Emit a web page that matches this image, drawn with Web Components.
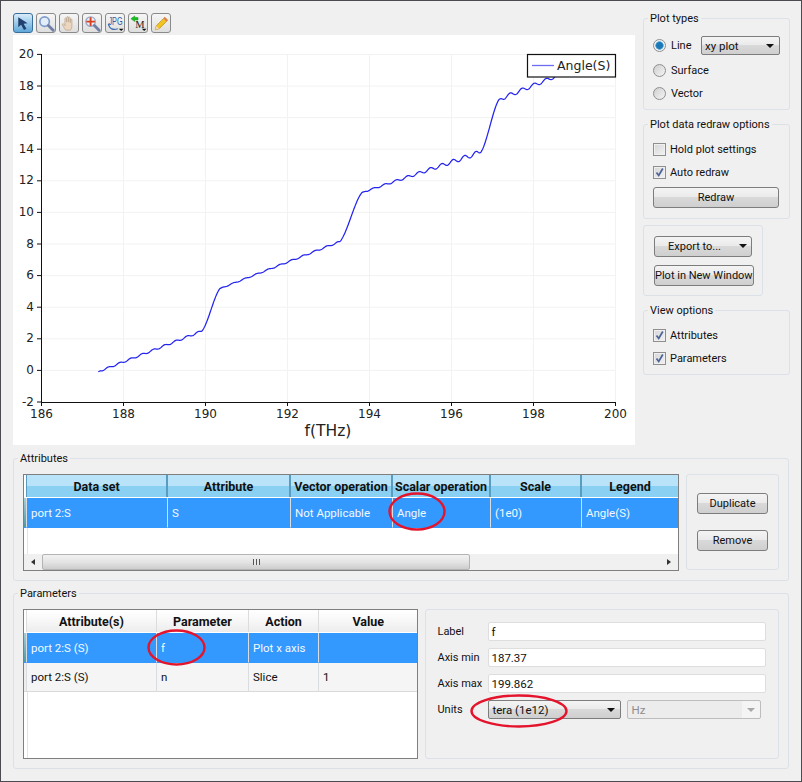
<!DOCTYPE html>
<html>
<head>
<meta charset="utf-8">
<title>Plot</title>
<style>
	html, body { margin: 0; padding: 0; background: #f0f0f0; }
</style>
</head>
<body>
<app-window>
	<tool-bar slot="toolbar"></tool-bar>
	<plot-canvas slot="plot"></plot-canvas>

	<div slot="side" style="display:flex;flex-direction:column;gap:6px;width:147px">
		<group-box title="Plot types" pad="10px 9px 6px 9px">
			<form-row h="19"><ui-radio checked>Line</ui-radio><ui-combo style="width:79px;margin-left:auto;margin-right:0" >xy plot</ui-combo></form-row>
			<form-row h="19" top="6"><ui-radio>Surface</ui-radio></form-row>
			<form-row h="19" top="4"><ui-radio>Vector</ui-radio></form-row>
		</group-box>
		<group-box title="Plot data redraw options" pad="8px 10px 10px 9px">
			<form-row h="18"><ui-check>Hold plot settings</ui-check></form-row>
			<form-row h="18" top="5"><ui-check checked>Auto redraw</ui-check></form-row>
			<form-row h="21" top="6"><ui-button style="width:126px">Redraw</ui-button></form-row>
		</group-box>
		<plain-box pad="10px 10px 9px 10px" style="width:120px">
			<form-row h="20"><ui-button style="width:100px" menu>Export to...</ui-button></form-row>
			<form-row h="21" top="9"><ui-button style="width:100px">Plot in New Window</ui-button></form-row>
		</plain-box>
		<group-box title="View options" pad="8px 10px 7px 9px">
			<form-row h="18"><ui-check checked>Attributes</ui-check></form-row>
			<form-row h="18" top="5"><ui-check checked>Parameters</ui-check></form-row>
		</group-box>
	</div>

	<group-box title="Attributes" pad="8px 9px 9px 9px" style="margin-top:5px">
		<div style="display:flex;gap:7px">
			<data-table skin="blue" h="97" style="width:656px"
				cols="141px 123px 102px 98px 91px 1fr"
				headers="Data set|Attribute|Vector operation|Scalar operation|Scale|Legend">
				<table-row selected cells="port 2:S|S|Not Applicable|Angle|(1e0)|Angle(S)"></table-row>
				<h-scroll slot="footer"></h-scroll>
			</data-table>
			<plain-box pad="18px 10px 19px 10px" style="width:93px;height:96px;box-sizing:border-box">
				<form-row h="21"><ui-button style="width:73px">Duplicate</ui-button></form-row>
				<form-row h="21" top="16"><ui-button style="width:73px">Remove</ui-button></form-row>
			</plain-box>
		</div>
	</group-box>

	<group-box title="Parameters" pad="8px 9px 9px 9px" style="margin-top:4px">
		<div style="display:flex;gap:7px">
			<data-table skin="plain" h="150" style="width:396px"
				cols="130px 92px 70px 1fr"
				headers="Attribute(s)|Parameter|Action|Value">
				<table-row selected cells="port 2:S (S)|f|Plot x axis|"></table-row>
				<table-row cells="port 2:S (S)|n|Slice|1"></table-row>
			</data-table>
			<plain-box pad="12px 12px 10px 11px" style="width:354px;height:150px;box-sizing:border-box">
				<form-line label="Label"><text-field>f</text-field></form-line>
				<form-line label="Axis min"><text-field>187.37</text-field></form-line>
				<form-line label="Axis max"><text-field>199.862</text-field></form-line>
				<form-line label="Units">
					<div style="display:flex;gap:6px;width:273px">
						<ui-combo style="width:133px">tera (1e12)</ui-combo>
						<ui-combo style="width:134px" disabled>Hz</ui-combo>
					</div>
				</form-line>
			</plain-box>
		</div>
	</group-box>
</app-window>

<script>
class AppWindow extends HTMLElement {
	constructor() {
		super();
		this.attachShadow({ mode: 'open' });
		this.shadowRoot.innerHTML = `
			<style>
				:host {
					display: block;
					position: relative;
					box-sizing: border-box;
					width: 802px;
					height: 782px;
					overflow: hidden;
					padding: 9px 12px 0 12px;
					background: #f0f0f0;
					border: 1px solid #4a4a50;
					font: 11px Roboto, "Noto Sans", sans-serif;
					color: #111;
				}
				.top { display: flex; gap: 8px; align-items: flex-start; }
				.left { width: 622px; padding-top: 3px; }
				.marks { position: absolute; left: -1px; top: -1px; pointer-events: none; }
				ellipse { fill: none; stroke: #e4142c; stroke-width: 2.4; }
			</style>
			<div class="top">
				<div class="left">
					<slot name="toolbar"></slot>
					<slot name="plot"></slot>
				</div>
				<slot name="side"></slot>
			</div>
			<slot></slot>
			<svg class="marks" width="802" height="782">
				<ellipse cx="417" cy="511.5" rx="27.5" ry="18"></ellipse>
				<ellipse cx="176.5" cy="647.5" rx="28" ry="17"></ellipse>
				<ellipse cx="519" cy="711" rx="47.5" ry="15.5"></ellipse>
			</svg>
		`;
	}
}

class ToolBar extends HTMLElement {
	constructor() {
		super();
		this.attachShadow({ mode: 'open' });
		const lens = `<circle cx="8" cy="8" r="5" fill="#e3edf9" stroke="#7e9ccb" stroke-width="1.8"/>
			<path d="M12 12l5 5" stroke="#6f7fa6" stroke-width="3" stroke-linecap="round"/>`;
		const drop = `<path d="M13.5 15.5h5l-2.5 2.5z" fill="#111"/>`;
		const icons = [
			`<path d="M4.5 3.5v10.5l3-2.6 3 5.4 2.6-1.4-3-5.2 4.2-.5z" fill="#22406f"/>`,
			lens,
			`<path d="M6 17c-1-2-3-4-3.500-6 0-1 1.200-1 1.800 0l.9 1.300V5c0-1.200 1.600-1.200 1.700 0l.2 3.500V3.500c0-1.200 1.700-1.200 1.800 0l.1 5V4.300c0-1.200 1.700-1.200 1.700 0l.1 4.700.1-3c.1-1.100 1.600-1.100 1.600 0V13c0 1.500-.8 3-1.500 4z" fill="#ecd6c0" stroke="#c2ab94" stroke-width=".9"/>`,
			`<circle cx="8" cy="8" r="5" fill="#eceff6" stroke="#98a8c8" stroke-width="1.4"/>
				<path d="M12 12l5 5" stroke="#6f7fa6" stroke-width="3" stroke-linecap="round"/>
				<path d="M8 3.500v9M3.500 8h9" stroke="#d8401f" stroke-width="2"/>`,
			`<text transform="translate(10 12) scale(.9 1.400)" font-family="Liberation Sans, sans-serif" font-size="8.500" text-anchor="middle" fill="#2c5da6">JPG</text>
				<path d="M2.500 10.500c1 5.500 5 6.500 10 5" fill="none" stroke="#3f6fb0" stroke-width="1.300"/>${drop}`,
			`<path d="M2 5l4-3v1.700h3.500v2.600H6V8z" fill="#16c21e" stroke="#149018" stroke-width=".5"/>
				<text x="11.500" y="15" font-family="Liberation Serif, serif" font-size="11" text-anchor="middle" fill="#222">M</text>${drop}`,
			`<path d="M3.500 16.500l1-4L13.500 3.500l3 3-9 9z" fill="#f3c41f" stroke="#b88f16" stroke-width=".8"/>
				<path d="M3.500 16.500l1-4 3 3z" fill="#f0d8b0"/><path d="M12.200 4.800l3 3 1.300-1.300-3-3z" fill="#e07a60"/>`
		];
		this.shadowRoot.innerHTML = `
			<style>
				:host { display: flex; gap: 3px; height: 20px; margin-bottom: 2px; }
				.tool {
					box-sizing: border-box;
					width: 20px;
					height: 20px;
					border: 1px solid #8a8a8a;
					border-radius: 3px;
					background: linear-gradient(#f6f6f6, #dedede);
				}
				.tool.on {
					border-color: #3a6f9c;
					background: linear-gradient(#d8ecfa, #5fa8d8);
				}
				svg { display: block; margin: -0.500px; }
			</style>
			${icons.map((icon, i) => `<div class="tool ${i === 0 ? 'on' : ''}"><svg width="19" height="19" viewBox="0 0 20 20">${icon}</svg></div>`).join('')}
		`;
	}
}

class PlotCanvas extends HTMLElement {
	constructor() {
		super();
		this.attachShadow({ mode: 'open' });
		this.shadowRoot.innerHTML = `
			<style>
				:host { display: block; width: 622px; height: 410px; background: #fff; }
				svg { display: block; }
				text { font-family: "DejaVu Sans", sans-serif; fill: #222; }
			</style>
			<svg width="622" height="410" viewBox="13 35 622 410">${this.#chart()}</svg>
		`;
	}

	// px coordinates below are the window's, the viewBox takes care of the offset
	#curve() {
		const plateaus = [
			{ x0: 98.3, x1: 202, y0: 371.7, y1: 331, peak: 108.3, period: 11.25, a0: 0.8, a1: 1 },
			{ x0: 220, x1: 340, y0: 288.5, y1: 241.5, peak: 233, period: 11.7, a0: 0.5, a1: 0.8 },
			{ x0: 362, x1: 481, y0: 192.5, y1: 152, peak: 373.3, period: 11.4, a0: 0.5, a1: 2.4 },
			{ x0: 499, x1: 566, y0: 99.5, y1: 72, peak: 510, period: 12, a0: 2, a1: 1.6 }
		];
		const pts = [];
		for (let x = 98.3; x <= 566; x += 0.5) {
			let y = 0;
			const p = plateaus.find(s => x >= s.x0 && x <= s.x1);
			if (p) {
				const t = (x - p.x0) / (p.x1 - p.x0);
				const fade = Math.min(1, (x - p.x0) / 5, (p.x1 - x) / 3);
				const amp = (p.a0 + (p.a1 - p.a0) * t) * Math.max(fade, 0);
				y = p.y0 + (p.y1 - p.y0) * t - amp * Math.cos(2 * Math.PI * (x - p.peak) / p.period);
			} else {
				const i = plateaus.findIndex(s => x < s.x0);
				const a = plateaus[i - 1], b = plateaus[i];
				const t = (x - a.x1) / (b.x0 - a.x1);
				// half linear, half eased: the steps of the curve are not that sharp
				const e = 0.5 * t + 0.5 * t * t * (3 - 2 * t);
				y = a.y1 + (b.y0 - a.y1) * e;
			}
			pts.push(x.toFixed(1) + ' ' + y.toFixed(2));
		}
		return 'M' + pts.join('L');
	}

	#chart() {
		const xs = [186, 188, 190, 192, 194, 196, 198, 200];
		const ys = [-2, 0, 2, 4, 6, 8, 10, 12, 14, 16, 18, 20];
		const px = v => 41.500 + (v - 186) * 41;
		const py = v => 402 - (v + 2) * 15.8;
		let s = '';
		for (const v of xs.slice(1)) s += `<path d="M${px(v)} 54V402" stroke="#f2f2f2" stroke-width="1"/>`;
		for (const v of ys.slice(1)) s += `<path d="M41 ${py(v)}H615" stroke="#f2f2f2" stroke-width="1"/>`;
		s += `<path d="${this.#curve()}" fill="none" stroke="#2424f0" stroke-width="1.250"/>`;
		s += `<path d="M41.500 54V402.500H615" fill="none" stroke="#111" stroke-width="1"/>`;
		for (const v of xs) {
			s += `<path d="M${px(v)} 402V406" stroke="#111"/>`;
			s += `<text x="${px(v)}" y="418" font-size="12" text-anchor="middle">${v}</text>`;
		}
		for (const v of ys) {
			s += `<path d="M37 ${py(v)}H41" stroke="#111"/>`;
			s += `<text x="34" y="${py(v) + 3.500}" font-size="12" text-anchor="end">${v}</text>`;
		}
		s += `<text x="328" y="436" font-size="15.500" text-anchor="middle">f(THz)</text>`;
		s += `<rect x="527.500" y="54.500" width="88" height="22.500" fill="#fff" stroke="#111" stroke-width="1.200"/>`;
		s += `<path d="M532 65.500H554" stroke="#6c6cf4" stroke-width="1.300"/>`;
		s += `<text x="557" y="69.500" font-size="12.500">Angle(S)</text>`;
		return s;
	}
}

class GroupBox extends HTMLElement {
	constructor() {
		super();
		this.attachShadow({ mode: 'open' });
		this.shadowRoot.innerHTML = `
			<style>
				:host { display: block; }
				fieldset {
					margin: 0;
					min-width: 0;
					border: 1px solid #dbe1e7;
					border-radius: 3px;
					padding: ${this.getAttribute('pad') || '8px'};
				}
				legend {
					margin-left: -5px;
					padding: 0 2px;
					line-height: 16px;
					white-space: nowrap;
				}
				legend span { position: relative; top: 1px; }
			</style>
			<fieldset>
				<legend><span>${this.getAttribute('title')}</span></legend>
				<slot></slot>
			</fieldset>
		`;
	}
}

class PlainBox extends HTMLElement {
	constructor() {
		super();
		this.attachShadow({ mode: 'open' });
		this.shadowRoot.innerHTML = `
			<style>
				:host {
					display: block;
					box-sizing: border-box;
					border: 1px solid #dbe1e7;
					border-radius: 3px;
					padding: ${this.getAttribute('pad') || '8px'};
				}
			</style>
			<slot></slot>
		`;
	}
}

class FormRow extends HTMLElement {
	constructor() {
		super();
		this.attachShadow({ mode: 'open' });
		this.shadowRoot.innerHTML = `
			<style>
				:host {
					display: flex;
					align-items: center;
					height: ${this.getAttribute('h') || 18}px;
					margin-top: ${this.getAttribute('top') || 0}px;
				}
			</style>
			<slot></slot>
		`;
	}
}

class FormLine extends HTMLElement {
	constructor() {
		super();
		this.attachShadow({ mode: 'open' });
		this.shadowRoot.innerHTML = `
			<style>
				:host {
					display: flex;
					align-items: center;
					height: 19px;
					margin-bottom: 7px;
				}
				span { width: 51px; flex: none; }
				div { flex: 1; }
			</style>
			<span>${this.getAttribute('label')}</span>
			<div><slot></slot></div>
		`;
	}
}

class TextField extends HTMLElement {
	constructor() {
		super();
		this.attachShadow({ mode: 'open' });
		this.shadowRoot.innerHTML = `
			<style>
				:host {
					display: block;
					box-sizing: border-box;
					height: 19px;
					line-height: 18px;
					padding-left: 2px;
					font-size: 11.500px;
					background: #fff;
					border: 1px solid #dedede;
					border-radius: 2px;
				}
			</style>
			<slot></slot>
		`;
	}
}

class UiButton extends HTMLElement {
	constructor() {
		super();
		this.attachShadow({ mode: 'open' });
		const menu = this.hasAttribute('menu');
		this.shadowRoot.innerHTML = `
			<style>
				:host {
					display: flex;
					align-items: center;
					justify-content: ${menu ? 'flex-start' : 'center'};
					box-sizing: border-box;
					height: 21px;
					white-space: nowrap;
					border: 1px solid #7d7d7d;
					border-radius: 3px;
					background: linear-gradient(#f4f4f4 0, #ebebeb 45%, #d9d9d9 50%, #cfcfcf 100%);
					padding: 0 ${menu ? '4px 0 13px' : '0'};
				}
				i {
					margin-left: auto;
					border: 4px solid transparent;
					border-top: 4px solid #111;
					border-bottom: 0;
				}
			</style>
			<slot></slot>${menu ? '<i></i>' : ''}
		`;
	}
}

class UiCombo extends HTMLElement {
	constructor() {
		super();
		this.attachShadow({ mode: 'open' });
		const off = this.hasAttribute('disabled');
		this.shadowRoot.innerHTML = `
			<style>
				:host {
					display: flex;
					align-items: center;
					box-sizing: border-box;
					height: 19px;
					padding: 0 5px 0 3px;
					font-size: 11.500px;
					border: 1px solid ${off ? '#bdbdbd' : '#7d7d7d'};
					border-radius: 2px;
					color: ${off ? '#8c8c8c' : '#111'};
					background: ${off ? 'linear-gradient(90deg, #ececec 86%, #f4f4f4 86%)' : 'linear-gradient(#f4f4f4 0, #ebebeb 45%, #d9d9d9 50%, #cfcfcf 100%)'};
				}
				i {
					margin-left: auto;
					border: 4px solid transparent;
					border-top: 4px solid ${off ? '#a8a8a8' : '#111'};
					border-bottom: 0;
				}
			</style>
			<slot></slot><i></i>
		`;
	}
}

class UiCheck extends HTMLElement {
	constructor() {
		super();
		this.attachShadow({ mode: 'open' });
		const tick = this.hasAttribute('checked')
			? '<svg width="11" height="11"><path d="M2.500 5.500l2.200 3L8.800 1.500" fill="none" stroke="#4d6299" stroke-width="1.700"/></svg>'
			: '';
		this.shadowRoot.innerHTML = `
			<style>
				:host { display: flex; align-items: center; gap: 4px; white-space: nowrap; }
				.box {
					box-sizing: border-box;
					width: 13px;
					height: 13px;
					border: 1px solid #8f8f8f;
					background: linear-gradient(135deg, #d6d6d6, #f2f2f2);
					box-shadow: inset 0 0 0 1px #f0f0f0;
				}
				svg { display: block; }
			</style>
			<div class="box">${tick}</div>
			<slot></slot>
		`;
	}
}

class UiRadio extends HTMLElement {
	constructor() {
		super();
		this.attachShadow({ mode: 'open' });
		const on = this.hasAttribute('checked');
		this.shadowRoot.innerHTML = `
			<style>
				:host { display: flex; align-items: center; gap: 5px; white-space: nowrap; }
				.dot {
					box-sizing: border-box;
					width: 13px;
					height: 13px;
					border: 1px solid #8f8f8f;
					border-radius: 50%;
					background: ${on ? 'radial-gradient(circle at 50% 50%, #1a78b8 0 3px, #6fb4dc 4px, #eef2f5 4.500px)' : 'linear-gradient(135deg, #cfcfcf, #f4f4f4)'};
				}
			</style>
			<div class="dot"></div>
			<slot></slot>
		`;
	}
}

class DataTable extends HTMLElement {
	constructor() {
		super();
		this.attachShadow({ mode: 'open' });
		const blue = this.getAttribute('skin') === 'blue';
		const heads = this.getAttribute('headers').split('|');
		this.style.setProperty('--cols', '3px ' + this.getAttribute('cols'));
		this.shadowRoot.innerHTML = `
			<style>
				:host {
					display: flex;
					flex-direction: column;
					box-sizing: border-box;
					height: ${this.getAttribute('h')}px;
					background: #fff;
					border: 1px solid #7f7f7f;
				}
				.head {
					display: grid;
					grid-template-columns: var(--cols);
					height: 22px;
					flex: none;
					border-bottom: 1px solid #fff;
				}
				.head div {
					display: flex;
					align-items: center;
					justify-content: center;
					padding-top: 1px;
					font-weight: 700;
					font-size: 12.500px;
					white-space: nowrap;
					overflow: hidden;
					box-sizing: border-box;
					border-right: ${blue ? '2px solid #5a9cc0' : '1px solid #dcdcdc'};
					background: ${blue
						? 'linear-gradient(#b9e3f8 0, #b9e3f8 50%, #8ad0f3 50%, #8ad0f3 100%)'
						: 'linear-gradient(#ffffff 0, #f7f7f7 50%, #ececec 100%)'};
				}
				.head div:last-child { border-right: 0; }
				.head .stub { background: #fff; border-right: ${blue ? '1px solid #5a9cc0' : '1px solid #dcdcdc'}; }
				.rest { flex: 1; width: 3px; border-right: 1px solid #e4e4e4; }
			</style>
			<div class="head"><div class="stub"></div>${heads.map(h => `<div>${h}</div>`).join('')}</div>
			<slot></slot>
			<div class="rest"></div>
			<slot name="footer"></slot>
		`;
	}
}

class TableRow extends HTMLElement {
	constructor() {
		super();
		this.attachShadow({ mode: 'open' });
		const on = this.hasAttribute('selected');
		const cells = this.getAttribute('cells').split('|');
		this.shadowRoot.innerHTML = `
			<style>
				:host {
					display: grid;
					grid-template-columns: var(--cols);
					height: 29.500px;
					font-size: 11.500px;
					color: ${on ? '#f4f8ff' : '#111'};
				}
				div {
					box-sizing: border-box;
					display: flex;
					align-items: center;
					padding: 1px 0 0 4px;
					white-space: nowrap;
					overflow: hidden;
					background: ${on ? '#3399ff' : '#f5f5f5'};
					border-right: 1px solid #d9dde0;
					border-bottom: 1px solid ${on ? '#3399ff' : '#d9d9d9'};
				}
				div:last-child { border-right: 0; }
				.stub { padding: 0; background: ${on ? 'linear-gradient(#a6cfd8, #4d9aa8)' : '#eeeeee'}; }
			</style>
			<div class="stub"></div>${cells.map(c => `<div>${c}</div>`).join('')}
		`;
	}
}

class HScroll extends HTMLElement {
	constructor() {
		super();
		this.attachShadow({ mode: 'open' });
		this.shadowRoot.innerHTML = `
			<style>
				:host {
					display: flex;
					align-items: stretch;
					height: 16px;
					background: #f0f0f0;
				}
				.end { width: 18px; flex: none; display: flex; align-items: center; justify-content: center; }
				.thumb {
					width: 428px;
					display: flex;
					align-items: center;
					justify-content: center;
					box-sizing: border-box;
					border: 1px solid #b4b4b4;
					border-radius: 2px;
					background: linear-gradient(#f2f2f2, #e4e4e4 50%, #cdcdcd);
				}
				.track { flex: 1; }
				i { border: 3.500px solid transparent; }
				.l { border-right: 4px solid #333; border-left: 0; }
				.r { border-left: 4px solid #333; border-right: 0; }
				.grip { width: 7px; height: 6px; background: repeating-linear-gradient(90deg, #555 0 1px, #e8e8e8 1px 3px); }
			</style>
			<div class="end"><i class="l"></i></div>
			<div class="thumb"><div class="grip"></div></div>
			<div class="track"></div>
			<div class="end"><i class="r"></i></div>
		`;
	}
}

customElements.define('app-window', AppWindow);
customElements.define('tool-bar', ToolBar);
customElements.define('plot-canvas', PlotCanvas);
customElements.define('group-box', GroupBox);
customElements.define('plain-box', PlainBox);
customElements.define('form-row', FormRow);
customElements.define('form-line', FormLine);
customElements.define('text-field', TextField);
customElements.define('ui-button', UiButton);
customElements.define('ui-combo', UiCombo);
customElements.define('ui-check', UiCheck);
customElements.define('ui-radio', UiRadio);
customElements.define('data-table', DataTable);
customElements.define('table-row', TableRow);
customElements.define('h-scroll', HScroll);
</script>
</body>
</html>
